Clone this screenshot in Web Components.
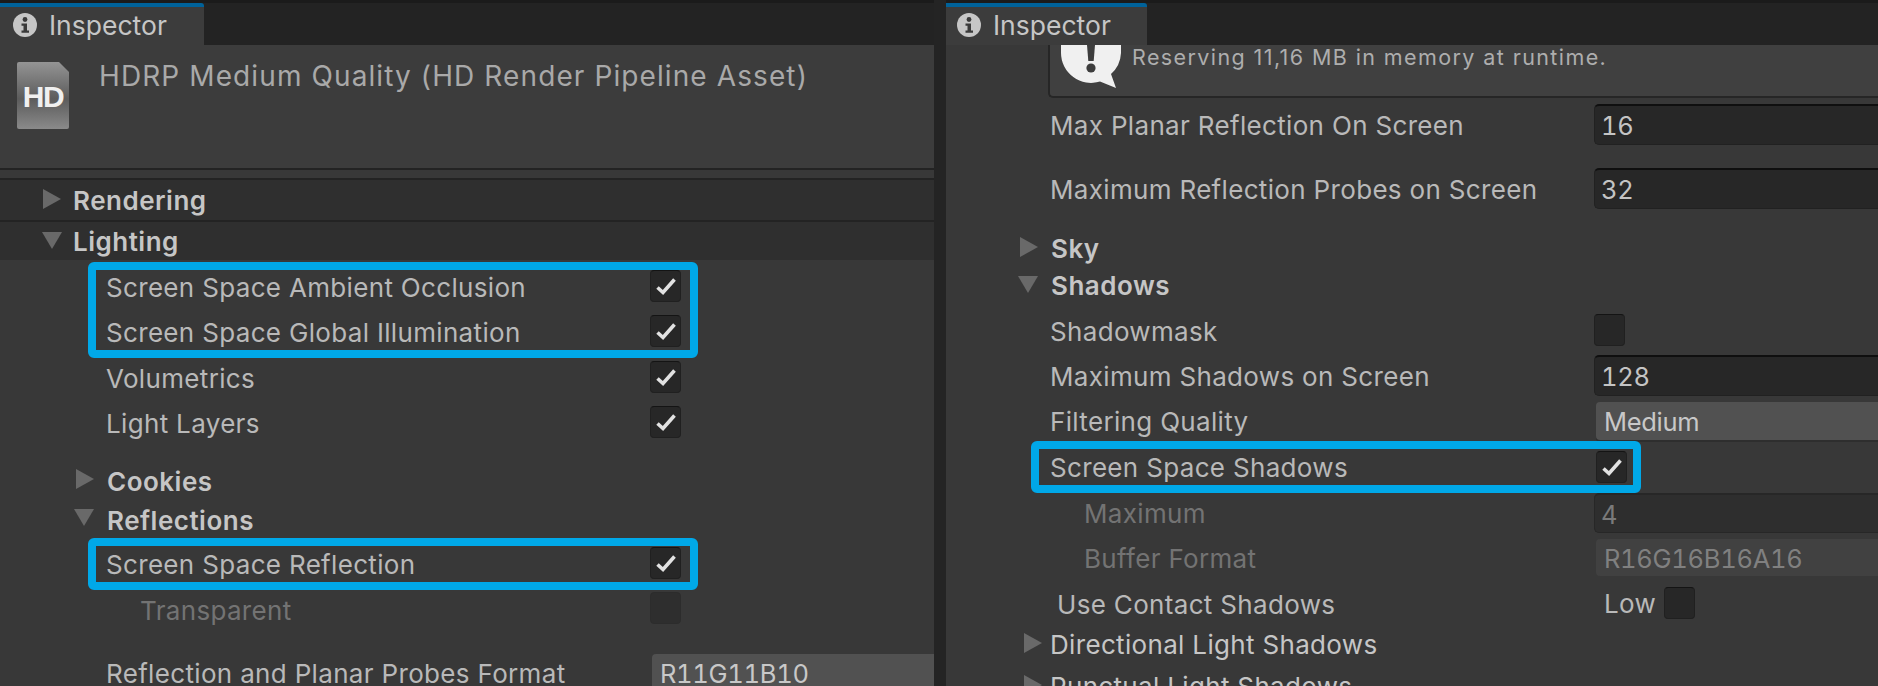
<!DOCTYPE html>
<html>
<head>
<meta charset="utf-8">
<title>Inspector</title>
<style>
html, body { margin: 0; height: 100%; overflow: hidden; background: #242424; }
body { font-family: Inter, "Noto Sans", sans-serif; font-size: 26px; letter-spacing: 0.33px; line-height: 22px; color: #b9b9b9; }
.page { display: flex; gap: 12px; height: 686px; overflow: hidden; }
</style>
</head>
<body>
<div class="page">
  <insp-panel style="flex: 0 0 934px; --ctl: 650px; --tab-w: 204px; --tab-pad: 13px">
    <span slot="tab">Inspector</span>
    <insp-header>HDRP Medium Quality (HD Render Pipeline Asset)</insp-header>
    <insp-band></insp-band>
    <insp-foldout at="43" text="73" bold bar style="height: 40px; border-bottom: 2px solid #232323">Rendering</insp-foldout>
    <insp-foldout at="42" text="73" bold open bar style="height: 38px">Lighting</insp-foldout>
    <insp-highlight style="margin-top: 4px; --left: 88px; --top: -2px; --bottom: -3px">
      <insp-row indent="106" h="45.5" label="Screen Space Ambient Occlusion"><insp-check checked></insp-check></insp-row>
      <insp-row indent="106" h="45.5" label="Screen Space Global Illumination"><insp-check checked></insp-check></insp-row>
    </insp-highlight>
    <insp-row indent="106" h="45.5" label="Volumetrics"><insp-check checked></insp-check></insp-row>
    <insp-row indent="106" h="45.5" label="Light Layers"><insp-check checked></insp-check></insp-row>
    <insp-foldout at="76" text="107" bold style="height: 38.5px; margin-top: 15px; --nudge: 4px">Cookies</insp-foldout>
    <insp-foldout at="74" text="107" bold open style="height: 38.5px; --nudge: 4px">Reflections</insp-foldout>
    <insp-highlight style="margin-top: 3px; --left: 88px; --top: -3.25px; --bottom: -3.25px">
      <insp-row indent="106" h="45.5" label="Screen Space Reflection"><insp-check checked></insp-check></insp-row>
    </insp-highlight>
    <insp-row indent="140" h="45.5" label="Transparent" disabled style="--nudge: 4px"><insp-check disabled></insp-check></insp-row>
    <insp-row indent="106" h="38" label="Reflection and Planar Probes Format" style="margin-top: 21.75px">
      <insp-drop>R11G11B10</insp-drop>
    </insp-row>
  </insp-panel>

  <insp-panel style="flex: 1; --ctl: 648px; --tab-w: 201px; --tab-pad: 11px">
    <span slot="tab">Inspector</span>
    <insp-help>Reserving 11,16 MB in memory at runtime.</insp-help>
    <insp-row indent="104" h="41" label="Max Planar Reflection On Screen" style="margin-top: 6px"><insp-field>16</insp-field></insp-row>
    <insp-row indent="104" h="41" label="Maximum Reflection Probes on Screen" style="margin-top: 23px"><insp-field>32</insp-field></insp-row>
    <insp-foldout at="74" text="105" bold style="height: 37px; margin-top: 21px; --nudge: 0px">Sky</insp-foldout>
    <insp-foldout at="72" text="105" bold open style="height: 37px; --nudge: 0px">Shadows</insp-foldout>
    <insp-row indent="104" h="45.5" label="Shadowmask" style="margin-top: 4.5px"><insp-check></insp-check></insp-row>
    <insp-row indent="104" h="41" label="Maximum Shadows on Screen" style="margin-top: 1px"><insp-field>128</insp-field></insp-row>
    <insp-row indent="104" h="38" label="Filtering Quality" style="margin-top: 6px"><insp-drop>Medium</insp-drop></insp-row>
    <insp-highlight style="margin-top: 5.5px; --left: 85px; --top: -4.5px; --bottom: -2.5px">
      <insp-row indent="104" h="45" label="Screen Space Shadows" style="--nudge: 0px"><insp-check checked style="margin-left: 2px"></insp-check></insp-row>
    </insp-highlight>
    <insp-row indent="138" h="40" label="Maximum" disabled style="margin-top: 2.5px"><insp-field disabled>4</insp-field></insp-row>
    <insp-row indent="138" h="37" label="Buffer Format" disabled style="margin-top: 6px"><insp-drop disabled>R16G16B16A16</insp-drop></insp-row>
    <insp-row indent="111" h="46" label="Use Contact Shadows" style="margin-top: 5px">
      <span style="margin-left: 10px; margin-right: 8px">Low</span><insp-check></insp-check>
    </insp-row>
    <insp-foldout at="78" text="104" style="height: 34px">Directional Light Shadows</insp-foldout>
    <insp-foldout at="78" text="104" style="height: 34px; margin-top: 8px">Punctual Light Shadows</insp-foldout>
  </insp-panel>
</div>

<script>
// every element gets an open shadow root with its own style
function shadow(el, html) {
    el.attachShadow({ mode: "open" }).innerHTML = html;
}

class InspPanel extends HTMLElement {
    constructor() {
        super();
        shadow(this, `<style>
:host { display: flex; flex-direction: column; min-width: 0; height: 686px; overflow: hidden; background: #383838; }
.strip { height: 3px; background: #1b1b1b; flex: none; }
.tabs { height: 42px; background: #232323; flex: none; display: flex; }
.tab { width: var(--tab-w); box-sizing: border-box; background: #3c3c3c; display: flex; align-items: center; gap: 12px;
       padding: 0 0 3px var(--tab-pad); border-top: 4px solid #00629a; border-top-right-radius: 3px; color: #c6c6c6; font-size: 26.5px; letter-spacing: 0; }
.tab svg { flex: none; }
</style>
<div class="strip"></div>
<div class="tabs"><div class="tab">
  <svg width="24" height="24" viewBox="0 0 24 24"><circle cx="12" cy="12" r="12" fill="#c6c6c6"/><circle cx="12" cy="6.5" r="2.4" fill="#3a3a3a"/><path d="M8.5 10.5h5.5v7h2v2.2H8.5v-2.2h2v-4.8h-2z" fill="#3a3a3a"/></svg>
  <slot name="tab"></slot>
</div></div>
<slot></slot>`);
    }
}

class InspHeader extends HTMLElement {
    constructor() {
        super();
        shadow(this, `<style>
:host { display: flex; flex: none; height: 125px; box-sizing: border-box; background: #3c3c3c; border-bottom: 2px solid #232323; padding: 17px 0 0 17px; }
.doc { position: relative; width: 52px; height: 67px; flex: none; display: flex; align-items: center; justify-content: center; }
.doc svg { position: absolute; inset: 0; }
.doc b { position: relative; font: bold 30px "Liberation Sans", sans-serif; letter-spacing: -1.5px; color: #f0f0f0; margin-top: 2px; }
.title { margin: 1px 0 0 30px; font-size: 28px; letter-spacing: 1.1px; line-height: 26px; color: #a9a9a9; }
</style>
<div class="doc">
  <svg width="52" height="67" viewBox="0 0 52 67"><defs><linearGradient id="g" x1="0" y1="0" x2="0" y2="1"><stop offset="0" stop-color="#949494"/><stop offset=".55" stop-color="#5c5c5c"/><stop offset="1" stop-color="#8a8a8a"/></linearGradient></defs><path d="M2 0H42L52 10V65a2 2 0 0 1-2 2H2a2 2 0 0 1-2-2V2a2 2 0 0 1 2-2z" fill="url(#g)"/></svg>
  <b>HD</b>
</div>
<div class="title"><slot></slot></div>`);
    }
}

class InspBand extends HTMLElement {
    constructor() {
        super();
        shadow(this, `<style>
:host { display: block; flex: none; height: 10px; box-sizing: border-box; background: #383838; border-bottom: 2px solid #232323; }
</style>`);
    }
}

class InspFoldout extends HTMLElement {
    constructor() {
        super();
        shadow(this, `<style>
:host { display: flex; flex: none; align-items: center; box-sizing: content-box; color: #c6c6c6; white-space: nowrap; }
:host([bar]) { background: #2f2f2f; }
:host([bold]) { font-weight: 600; letter-spacing: 0.5px; }
svg { flex: none; margin-top: -3px; }
span { margin-top: var(--nudge, 2px); }
</style>
<svg width="20" height="20" viewBox="0 0 20 20"></svg><span><slot></slot></span>`);
    }
    connectedCallback() {
        const at = Number(this.getAttribute("at"));
        const text = Number(this.getAttribute("text"));
        const svg = this.shadowRoot.querySelector("svg");
        svg.innerHTML = this.hasAttribute("open")
            ? `<polygon points="0,2 20,2 10,19" fill="#696969"/>`
            : `<polygon points="0,0 18,10 0,20" fill="#696969"/>`;
        this.style.paddingLeft = at + "px";
        svg.style.marginRight = (text - at - 20) + "px";
    }
}

class InspRow extends HTMLElement {
    constructor() {
        super();
        shadow(this, `<style>
:host { display: flex; flex: none; align-items: center; box-sizing: border-box; white-space: nowrap; }
:host([disabled]) .label { color: #737373; }
.label { flex: none; margin-top: var(--nudge, 2px); }
.ctl { flex: 1; min-width: 0; display: flex; align-items: center; align-self: stretch; }
</style>
<span class="label"></span><div class="ctl"><slot></slot></div>`);
    }
    connectedCallback() {
        const indent = Number(this.getAttribute("indent"));
        this.style.height = this.getAttribute("h") + "px";
        this.style.paddingLeft = indent + "px";
        const label = this.shadowRoot.querySelector(".label");
        label.textContent = this.getAttribute("label");
        label.style.width = `calc(var(--ctl) - ${indent}px)`;
    }
}

class InspCheck extends HTMLElement {
    constructor() {
        super();
        shadow(this, `<style>
:host { display: block; flex: none; width: 31px; height: 32px; box-sizing: border-box; margin-bottom: 2px;
        background: #272727; border: 1px solid #202020; border-top-color: #141414; border-radius: 4px; }
:host([disabled]) { background: #2e2e2e; border-color: #2c2c2c; }
svg { display: block; }
</style>
<svg width="29" height="30" viewBox="0 0 29 30"></svg>`);
    }
    connectedCallback() {
        if (this.hasAttribute("checked")) {
            this.shadowRoot.querySelector("svg").innerHTML =
                `<path d="M6.5 16.5 L12 21.5 L23.5 8.5" fill="none" stroke="#e2e2e2" stroke-width="3.6"/>`;
        }
    }
}

class InspField extends HTMLElement {
    constructor() {
        super();
        shadow(this, `<style>
:host { display: flex; flex: 1; align-items: center; align-self: stretch; box-sizing: border-box; padding: 2px 0 0 6px;
        background: #272727; border: 1px solid #212121; border-top: 2px solid #0f0f0f; border-right: 0;
        border-radius: 5px 0 0 5px; color: #c4c4c4; font-size: 25.5px; letter-spacing: -0.3px; font-variant-numeric: tabular-nums; }
:host([disabled]) { background: #2e2e2e; border-color: #272727; color: #7a7a7a; }
</style><slot></slot>`);
    }
}

class InspDrop extends HTMLElement {
    constructor() {
        super();
        shadow(this, `<style>
:host { display: flex; flex: 1; align-items: center; align-self: stretch; box-sizing: border-box; margin-left: 2px; padding: 2px 0 0 8px;
        background: #515151; border-radius: 4px 0 0 4px; color: #c8c8c8; box-shadow: 0 2px 0 #2e2e2e;
        font-size: 25.5px; letter-spacing: -0.3px; font-variant-numeric: tabular-nums; }
:host([disabled]) { background: #414141; color: #808080; box-shadow: none; }
</style><slot></slot>`);
    }
}

class InspHelp extends HTMLElement {
    constructor() {
        super();
        shadow(this, `<style>
:host { display: flex; flex: none; height: 53px; margin-left: 102px; box-sizing: border-box; overflow: hidden; background: #404040;
        border: 2px solid #262626; border-width: 0 0 2px 2px; border-bottom-left-radius: 5px; padding-left: 11px; color: #aeaeae; }
svg { flex: none; }
span { margin: 0 0 0 9px; font-size: 21.5px; letter-spacing: 1.4px; line-height: 24px; }
</style>
<svg width="62" height="43" viewBox="0 0 62 43"><path d="M0 0V8A30 30 0 0 0 39 36.5L55 43 50 29A30 30 0 0 0 60 8V0z" fill="#f0f0f0"/><path d="M26 0H34L32.7 16H27.3z" fill="#3d3d3d"/><circle cx="30" cy="23" r="4.6" fill="#3d3d3d"/></svg>
<span><slot></slot></span>`);
    }
}

class InspHighlight extends HTMLElement {
    constructor() {
        super();
        shadow(this, `<style>
:host { display: block; flex: none; position: relative; }
.frame { position: absolute; left: var(--left); top: var(--top); bottom: var(--bottom); width: 610px; box-sizing: border-box;
         border: 8px solid #00a8e8; border-radius: 6px; pointer-events: none; }
</style><slot></slot><div class="frame"></div>`);
    }
}

customElements.define("insp-panel", InspPanel);
customElements.define("insp-band", InspBand);
customElements.define("insp-header", InspHeader);
customElements.define("insp-foldout", InspFoldout);
customElements.define("insp-row", InspRow);
customElements.define("insp-check", InspCheck);
customElements.define("insp-field", InspField);
customElements.define("insp-drop", InspDrop);
customElements.define("insp-help", InspHelp);
customElements.define("insp-highlight", InspHighlight);
</script>
</body>
</html>
